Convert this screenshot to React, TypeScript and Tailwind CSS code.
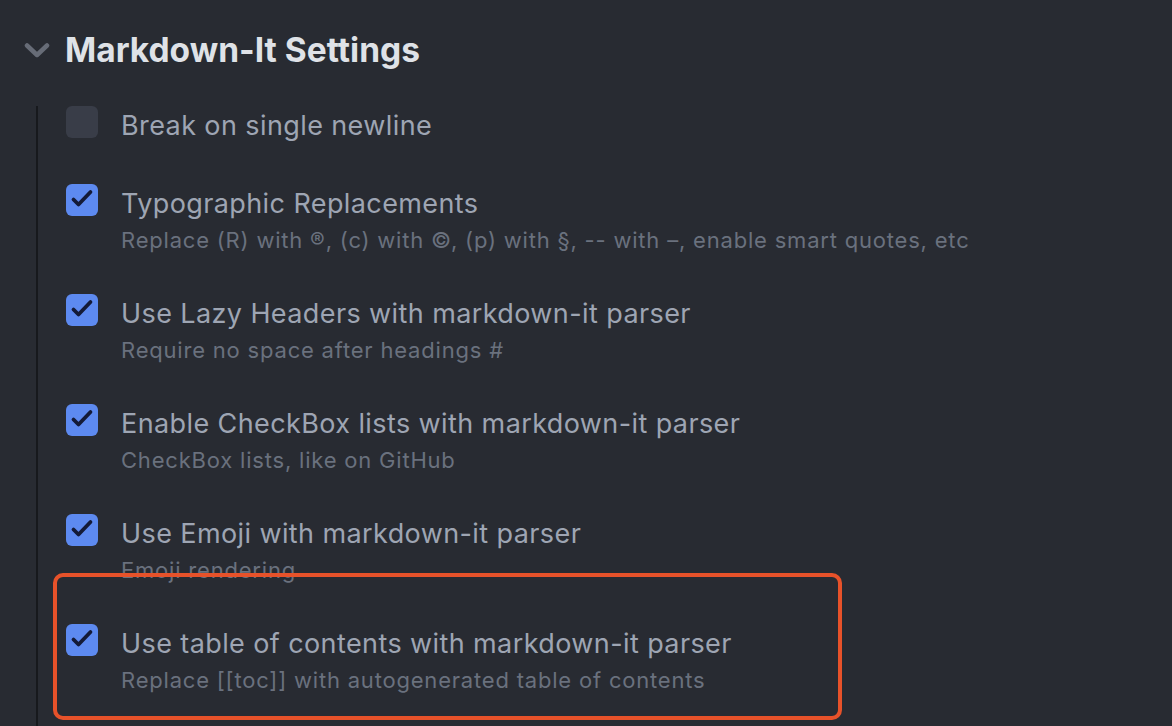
const settings = [
  { label: "Break on single newline", checked: false },
  {
    label: "Typographic Replacements",
    desc: "Replace (R) with ®, (c) with ©, (p) with §, -- with –, enable smart quotes, etc",
    checked: true,
  },
  { label: "Use Lazy Headers with markdown-it parser", desc: "Require no space after headings #", checked: true },
  { label: "Enable CheckBox lists with markdown-it parser", desc: "CheckBox lists, like on GitHub", checked: true },
  { label: "Use Emoji with markdown-it parser", desc: "Emoji rendering", checked: true },
  {
    label: "Use table of contents with markdown-it parser",
    desc: "Replace [[toc]] with autogenerated table of contents",
    checked: true,
    highlight: true,
  },
];

function Checkbox({ checked }: { checked: boolean }) {
  if (!checked) {
    return <div className="w-8 h-8 shrink-0 rounded-[6px] bg-[#393d48]" />;
  }
  return (
    <div className="w-8 h-8 shrink-0 rounded-[6px] bg-[#5d8af0]">
      <svg width="32" height="32" viewBox="0 0 32 32" fill="none">
        <path d="M7.5 15.5 L12.5 20.5 L24.5 8" stroke="#141b38" strokeWidth="3.8" strokeLinecap="round" strokeLinejoin="round" />
      </svg>
    </div>
  );
}

export default function App() {
  return (
    <div
      className="w-[1172px] h-[726px] overflow-hidden bg-[#282b32] pt-[28px]"
      style={{ fontFamily: "Inter, 'Noto Sans', sans-serif" }}
    >
      <div className="flex items-center h-[42px]">
        <div className="w-[65px] flex justify-center pl-[8px] pt-[2px]">
          <svg width="26" height="17" viewBox="0 0 26 17" fill="none">
            <path d="M3 3.5 L13 13 L23 3.5" stroke="#676c77" strokeWidth="4.5" strokeLinecap="round" strokeLinejoin="round" />
          </svg>
        </div>
        <h1 className="text-[33.5px] font-bold text-[#dfe2e7] pt-[2px]">Markdown-It Settings</h1>
      </div>

      <div className="ml-[36px] mt-[36px] border-l-2 border-[#17191d] pl-[28px] pb-[40px]">
        {settings.map((s) => (
          <div key={s.label} className={`relative flex gap-[23px] ${s.desc ? "pb-[40px]" : "pb-[46px]"}`}>
            <Checkbox checked={s.checked} />
            <div className="flex flex-col">
              <div className="h-[32px] text-[27px] leading-[39px] tracking-[0.4px] text-[#9ea5b3] whitespace-nowrap">
                {s.label}
              </div>
              {s.desc && (
                <div className="mt-[10px] h-[28px] text-[22px] leading-[28px] tracking-[0.8px] text-[#6a717e] whitespace-nowrap">
                  {s.desc}
                </div>
              )}
            </div>
            {s.highlight && (
              <div className="absolute left-[-13px] top-[-51px] w-[789px] h-[147px] rounded-[10px] border-4 border-[#e7522a]" />
            )}
          </div>
        ))}
      </div>
    </div>
  );
}
